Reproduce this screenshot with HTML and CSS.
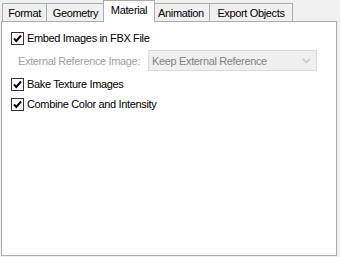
FILE: index.html
```html
<!DOCTYPE html>
<html lang="en">
<head>
  <meta charset="UTF-8" />
  <title>FBX Export – Material</title>
  <link rel="stylesheet" href="styles.css">
</head>
<body>

  <div class="tabs">
    <div class="tab tab-format">Format</div>
    <div class="tab tab-geometry">Geometry</div>
    <div class="tab tab-material active">Material</div>
    <div class="tab tab-animation">Animation</div>
    <div class="tab tab-export">Export Objects</div>
  </div>

  <div class="panel">
    <label class="check-row">
      <span class="checkbox">
        <svg viewBox="0 0 11 11"><polyline points="2 5.5 4.3 8 9 2.5" /></svg>
      </span>
      Embed Images in FBX File
    </label>

    <div class="select-row">
      <span class="select-label">External Reference Image:</span>
      <div class="select">
        <span>Keep External Reference</span>
        <svg viewBox="0 0 9 6"><polyline points="1 1 4.5 4.5 8 1" /></svg>
      </div>
    </div>

    <label class="check-row">
      <span class="checkbox">
        <svg viewBox="0 0 11 11"><polyline points="2 5.5 4.3 8 9 2.5" /></svg>
      </span>
      Bake Texture Images
    </label>

    <label class="check-row">
      <span class="checkbox">
        <svg viewBox="0 0 11 11"><polyline points="2 5.5 4.3 8 9 2.5" /></svg>
      </span>
      Combine Color and Intensity
    </label>
  </div>

</body>
</html>
```

FILE: styles.css
```css
body {
  font-family: 'Liberation Sans', Arial, sans-serif;
  font-size: 11px;
  letter-spacing: -0.35px;
  background: #f0f0f0;
  margin: 0;
  padding: 1px 3px 1px 1px;
  color: #000;
  height: 255px;
  display: flex;
  flex-direction: column;
}

.tabs {
  display: flex;
  align-items: flex-end;
  height: 20px;
  padding-left: 1px;
}

.tab {
  box-sizing: border-box;
  height: 18px;
  border: 1px solid #acacac;
  border-bottom: none;
  background: #f0f0f0;
  display: flex;
  align-items: center;
  justify-content: center;
  margin-left: -1px;
}

.tab-format { width: 45px; margin-left: 0; }
.tab-geometry { width: 59px; }
.tab-material { width: 52px; }
.tab-animation { width: 58px; }
.tab-export { width: 84px; }

.tab.active {
  position: relative;
  z-index: 1;
  height: 22px;
  margin-bottom: -1px;
  background: #fff;
  margin-left: -2px;
  margin-right: -2px;
  padding-bottom: 3px;
}

.panel {
  flex: 1;
  background: #fff;
  border: 1px solid #acacac;
  padding: 8px 9px;
  display: flex;
  flex-direction: column;
  gap: 4px;
}

.check-row {
  display: flex;
  align-items: center;
  gap: 3px;
  height: 16px;
}

.checkbox {
  box-sizing: border-box;
  width: 13px;
  height: 13px;
  border: 1px solid #333;
  background: #fff;
  display: flex;
}

.checkbox svg {
  width: 11px;
  height: 11px;
  fill: none;
  stroke: #000;
  stroke-width: 2;
}

.select-row {
  display: flex;
  align-items: center;
  height: 21px;
  padding-left: 7px;
  margin-bottom: 1px;
}

.select-label {
  color: #a0a0a0;
  width: 130px;
}

.select {
  box-sizing: border-box;
  width: 169px;
  height: 21px;
  border: 1px solid #d9d9d9;
  background: #efefef;
  color: #838383;
  display: flex;
  align-items: center;
  justify-content: space-between;
  padding: 0 5px 0 3px;
}

.select svg {
  width: 9px;
  height: 6px;
  fill: none;
  stroke: #bfbfbf;
  stroke-width: 1.3;
}
```
